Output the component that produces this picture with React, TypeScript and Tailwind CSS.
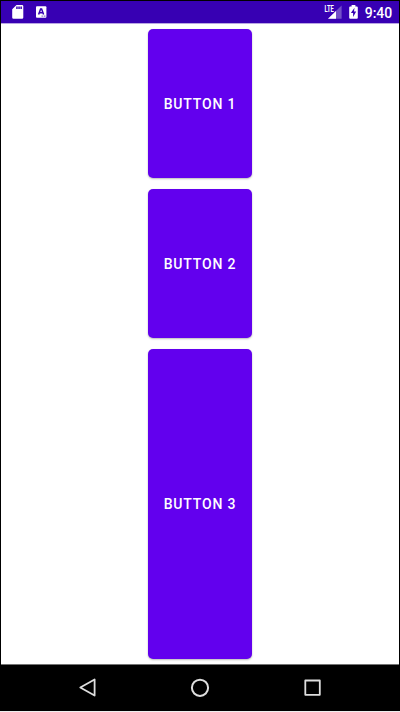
import React from "react";

const buttonBase =
  "flex w-[104px] items-center justify-center rounded-[5px] bg-[#6200ee] text-[14px] font-medium leading-none tracking-[0.84px] text-white shadow-[0_1px_2px_rgba(0,0,0,0.28)]";

function StatusBar() {
  return (
    <header className="flex h-[22px] shrink-0 items-center justify-between bg-[#3700b3] text-white">
      <div className="flex h-full items-start pl-[11px] pt-1">
        <svg width="12" height="14" viewBox="0 0 12 14">
          <path
            fill="#fff"
            fillRule="evenodd"
            d="M4.5 0H10a1.3 1.3 0 0 1 1.3 1.3v11.2a1.3 1.3 0 0 1-1.3 1.3H1.5A1.3 1.3 0 0 1 .2 12.5V4.3zM4.2 1.4v2.6h1.5V1.4zm2.1 0v2.6h1.5V1.4zm2.1 0v2.6h1.5V1.4z"
          />
        </svg>
        <svg className="ml-[12px] mt-px" width="12" height="13" viewBox="0 0 12 13">
          <rect x="0" y="0.3" width="10.4" height="11.4" rx="0.9" fill="#fff" />
          <path d="M2.6 8.4 4.6 2.9h1l2 5.5M3.5 6.7h3.2" fill="none" stroke="#3700b3" strokeWidth="1.5" />
          <path d="M5.5 10.1h1.4M7.7 10.1h1.8" stroke="#8d72cf" strokeWidth="1.2" />
        </svg>
      </div>
      <div className="flex h-full items-start pr-[7px]">
        <svg className="mt-[3px]" width="19" height="15" viewBox="0 0 19 15">
          <path d="M17.6 1.5v13.3H4z" fill="#7350c8" />
          <path d="M12 6.9v7.9H4z" fill="#fff" />
          <path d="M0 0h10.1v7.8H0z" fill="#3700b3" />
          <text x="0.4" y="7.6" fill="#fff" fontFamily="Roboto, sans-serif" fontSize="8.6" fontWeight="700" textLength="9.4" lengthAdjust="spacingAndGlyphs">
            LTE
          </text>
        </svg>
        <svg className="ml-[6px] mt-[3px]" width="10" height="15" viewBox="0 0 10 15">
          <path d="M2.6 1h3.8v1.4h1.4q1 0 1 1v10.3q0 1-1 1H1.2q-1 0-1-1V3.4q0-1 1-1h1.4z" fill="#fff" />
          <path d="M5.5 3.8 1.9 9h2.2v4L7.2 7.6H5z" fill="#3700b3" />
        </svg>
        <span className="ml-[6px] mt-[4px] text-[14px] font-medium leading-[16px] tracking-[-0.1px]">9:40</span>
      </div>
    </header>
  );
}

function NavigationBar() {
  return (
    <nav className="flex h-[47px] shrink-0 items-center justify-around border-t border-[#737373] bg-black px-[30px]">
      <svg width="20" height="20" viewBox="0 0 20 20" fill="none" stroke="#dedede" strokeWidth="1.8" strokeLinejoin="round">
        <path d="M17.6 1.5v16L3.3 9.5z" />
      </svg>
      <svg width="20" height="20" viewBox="0 0 20 20" fill="none" stroke="#dedede" strokeWidth="2">
        <circle cx="10" cy="9.8" r="8.1" />
      </svg>
      <svg width="20" height="20" viewBox="0 0 20 20" fill="none" stroke="#dedede" strokeWidth="1.8" strokeLinejoin="round">
        <rect x="2.3" y="2.5" width="14.5" height="14.3" />
      </svg>
    </nav>
  );
}

export default function App() {
  return (
    <div className="h-[712px] w-[400px] bg-[#eeeeee] font-['Roboto',sans-serif]">
      <div className="flex h-[711px] flex-col border-x border-t border-black bg-white">
        <StatusBar />
        <main className="flex flex-1 flex-col items-center gap-[11px] border-t border-[#b9a6e3] pb-[5px] pt-[5px]">
          <button className={`${buttonBase} h-[149px]`}>BUTTON 1</button>
          <button className={`${buttonBase} h-[149px]`}>BUTTON 2</button>
          <button className={`${buttonBase} h-[310px]`}>BUTTON 3</button>
        </main>
        <NavigationBar />
      </div>
    </div>
  );
}
